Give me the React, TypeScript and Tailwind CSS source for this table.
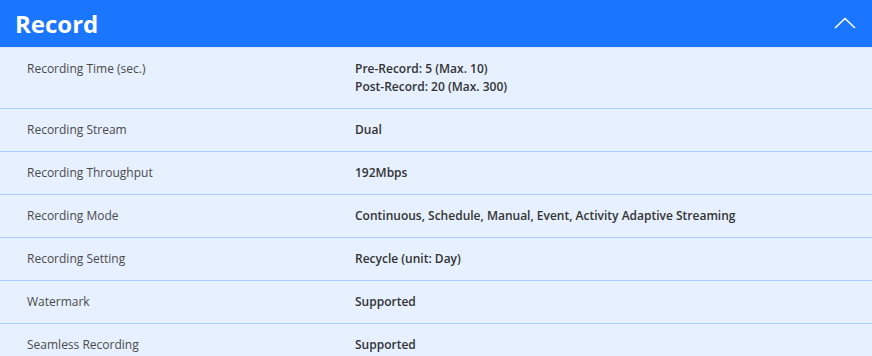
const rows: { label: string; value: string[] }[] = [
  { label: "Recording Time (sec.)", value: ["Pre-Record: 5 (Max. 10)", "Post-Record: 20 (Max. 300)"] },
  { label: "Recording Stream", value: ["Dual"] },
  { label: "Recording Throughput", value: ["192Mbps"] },
  { label: "Recording Mode", value: ["Continuous, Schedule, Manual, Event, Activity Adaptive Streaming"] },
  { label: "Recording Setting", value: ["Recycle (unit: Day)"] },
  { label: "Watermark", value: ["Supported"] },
  { label: "Seamless Recording", value: ["Supported"] },
];

export default function App() {
  return (
    <div className="h-[356px] w-[872px] overflow-hidden bg-[#e6f0ff] font-['Open_Sans',sans-serif]">
      <div className="flex h-[48px] items-center justify-between border-b border-[#dbe9ff] bg-[#1a75ff] pl-[15px] pr-[16px]">
        <h2 className="text-[24px] font-bold leading-none text-white">Record</h2>
        <svg width="22" height="12" viewBox="0 0 22 12" fill="none" className="mb-[2px]">
          <path d="M1 11 L11 1.5 L21 11" stroke="white" strokeWidth="1.6" />
        </svg>
      </div>
      <div>
        {rows.map((row) => (
          <div
            key={row.label}
            className="flex items-start border-b border-[#a9ccff] py-[12px] text-[12px] leading-[18px]"
          >
            <div className="w-[355px] shrink-0 pl-[27px] text-[#4a4a4a]">{row.label}</div>
            <div className="font-semibold text-[#333]">
              {row.value.map((line) => (
                <div key={line}>{line}</div>
              ))}
            </div>
          </div>
        ))}
      </div>
    </div>
  );
}
